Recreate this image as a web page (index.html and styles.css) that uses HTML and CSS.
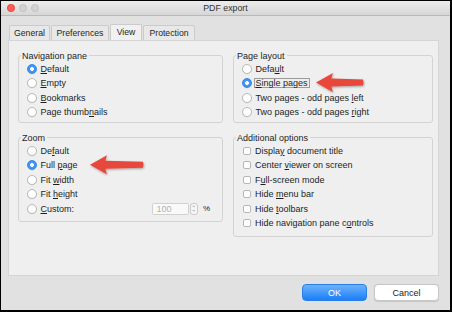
FILE: index.html
```html
<!DOCTYPE html>
<html>
<head>
<meta charset="utf-8">
<link rel="stylesheet" href="styles.css">
</head>
<body>
<div class="window">
  <div class="titlebar">
    <div class="lights"><span class="light red"></span><span class="light"></span><span class="light"></span></div>
    <div class="title">PDF export</div>
    <div></div>
  </div>
  <div class="content">
    <div class="tabs">
      <div class="tab w-general">General</div>
      <div class="tab w-pref">Preferences</div>
      <div class="tab w-view active">View</div>
      <div class="tab w-prot">Protection</div>
    </div>
    <div class="panel">
      <div class="grid">
        <div class="group short">
          <div class="legend">Navigation pane</div>
          <div class="row"><span class="radio on"></span><span><u>D</u>efault</span></div>
          <div class="row"><span class="radio"></span><span><u>E</u>mpty</span></div>
          <div class="row"><span class="radio"></span><span><u>B</u>ookmarks</span></div>
          <div class="row"><span class="radio"></span><span>Page thumb<u>n</u>ails</span></div>
        </div>
        <div class="group short">
          <div class="legend">Page layout</div>
          <div class="row"><span class="radio"></span><span>Defa<u>u</u>lt</span></div>
          <div class="row"><span class="radio on"></span><span class="focus"><u>S</u>ingle pages</span></div>
          <div class="row"><span class="radio"></span><span>Two pages - odd pages <u>l</u>eft</span></div>
          <div class="row"><span class="radio"></span><span>Two pages - odd pages <u>r</u>ight</span></div>
        </div>
        <div class="group">
          <div class="legend">Zoom</div>
          <div class="row"><span class="radio"></span><span>De<u>f</u>ault</span></div>
          <div class="row"><span class="radio on"></span><span>Full <u>p</u>age</span></div>
          <div class="row"><span class="radio"></span><span>Fit <u>w</u>idth</span></div>
          <div class="row"><span class="radio"></span><span>Fit <u>h</u>eight</span></div>
          <div class="row custom"><span class="radio"></span><span><u>C</u>ustom:</span>
            <span class="spin">100</span>
            <span class="stepper"><svg width="6" height="11" viewBox="0 0 6 11"><path d="M1.5 4 L3 2.5 L4.5 4 M1.5 7 L3 8.5 L4.5 7" fill="none" stroke="#9a9a9a" stroke-width="0.8"/></svg></span>
            <span class="pct">%</span>
          </div>
        </div>
        <div class="group">
          <div class="legend">Additional options</div>
          <div class="row"><span class="check"></span><span>Displa<u>y</u> document title</span></div>
          <div class="row"><span class="check"></span><span>Center <u>v</u>iewer on screen</span></div>
          <div class="row"><span class="check"></span><span>F<u>u</u>ll-screen mode</span></div>
          <div class="row"><span class="check"></span><span>Hide <u>m</u>enu bar</span></div>
          <div class="row"><span class="check"></span><span>Hide <u>t</u>oolbars</span></div>
          <div class="row"><span class="check"></span><span>Hide navigation pane c<u>o</u>ntrols</span></div>
        </div>
      </div>
    </div>
    <div class="buttons">
      <div class="btn ok">OK</div>
      <div class="btn cancel">Cancel</div>
    </div>
  </div>
  <svg class="arrows" width="452" height="312" viewBox="0 0 452 312">
    <defs>
      <filter id="sh" x="-20%" y="-30%" width="140%" height="160%">
        <feDropShadow dx="0.6" dy="1" stdDeviation="0.8" flood-color="#000" flood-opacity="0.35"/>
      </filter>
    </defs>
    <path filter="url(#sh)" fill="#e8463a" d="M316 82.6 L333 73 Q331.5 76.5 331.5 78.6 L363 79.6 Q364 82.6 363 85.6 L331.5 86.6 Q331.5 88.7 333 92.2 Z"/>
    <path filter="url(#sh)" fill="#e8463a" d="M90 164.8 L107 155.3 Q105.5 158.8 105.5 160.8 L143 161.8 Q144 164.8 143 167.8 L105.5 168.8 Q105.5 170.9 107 174.4 Z"/>
  </svg>
</div>
</body>
</html>
```

FILE: styles.css
```css
* { box-sizing: border-box; }
html, body { margin: 0; padding: 0; }
body {
  width: 452px;
  height: 312px;
  background: #000;
  overflow: hidden;
  font-family: "Liberation Sans", Arial, sans-serif;
  font-size: 9px;
  color: #1e1e1e;
}
.window {
  position: relative;
  width: 452px;
  height: 312px;
  border: 1px solid #000;
  border-right-width: 2px;
  border-bottom-width: 2px;
  background: #e1e1e1;
  display: flex;
  flex-direction: column;
}
.titlebar {
  flex: none;
  height: 15px;
  background: linear-gradient(#ececec, #d7d7d7);
  border-bottom: 1px solid #b9b9b9;
  display: grid;
  grid-template-columns: 1fr auto 1fr;
  align-items: center;
}
.lights { display: flex; gap: 4.5px; padding-left: 6px; }
.light {
  width: 7.5px;
  height: 7.5px;
  border-radius: 50%;
  background: #d2d2d2;
  border: 0.5px solid #c2c2c2;
}
.light.red { background: #fc5e56; border-color: #e2463f; }
.title { font-size: 8.8px; color: #333; line-height: 14px; }
.content {
  flex: 1;
  display: flex;
  flex-direction: column;
  padding: 8px 11px 0 7px;
}
.tabs {
  display: flex;
  align-items: flex-end;
  gap: 1px;
  height: 16px;
  padding-left: 1px;
}
.tab {
  height: 15px;
  border: 1px solid #cbcbcb;
  border-bottom: none;
  border-radius: 2px 2px 0 0;
  background: #e8e8e8;
  font-size: 8.7px;
  line-height: 14px;
  text-align: center;
  color: #1e1e1e;
}
.tab.active { height: 16px; background: #f1f1f1; line-height: 15px; }
.w-general { width: 41px; }
.w-pref { width: 58px; }
.w-view { width: 32px; }
.w-prot { width: 52px; }
.panel {
  width: 431px;
  height: 236px;
  background: #efefef;
  border: 1px solid #d5d5d5;
  padding: 14px 5px 0 9px;
}
.grid {
  display: grid;
  grid-template-columns: 205px 200px;
  column-gap: 10px;
  row-gap: 14px;
  align-items: start;
}
.group {
  border: 1px solid #d3d3d3;
  border-radius: 3px;
  padding: 0.5px 0 5px;
}
.group.short { padding-bottom: 2.5px; }
.legend {
  display: table;
  height: 11px;
  line-height: 11px;
  margin: -6px 0 0 2px;
  padding: 0 2px 0 1px;
  background: #efefef;
}
.row {
  height: 14.5px;
  display: flex;
  align-items: center;
  padding-left: 8px;
  white-space: nowrap;
}
u { text-decoration-thickness: 1px; text-underline-offset: 1px; }
.radio {
  flex: none;
  width: 10px;
  height: 10px;
  border-radius: 50%;
  background: #fff;
  border: 1px solid #b9b9b9;
  margin-right: 3.5px;
  box-shadow: 0 0.5px 0.5px rgba(0,0,0,0.08);
}
.radio.on {
  border-color: #3484e6;
  background: radial-gradient(circle, #fff 0 1.7px, #3f96f8 2.2px);
}
.check {
  flex: none;
  width: 8px;
  height: 8px;
  border: 1px solid #b6b6b6;
  border-radius: 2px;
  background: #fff;
  margin-left: 1px;
  margin-right: 4px;
}
.focus {
  display: inline-block;
  height: 10px;
  line-height: 8px;
  border: 1px solid #9c9c9c;
  padding: 0 1px;
  margin-left: -2px;
}
.spin {
  margin-left: auto;
  width: 37px;
  height: 12.5px;
  line-height: 10.5px;
  border: 1px solid #d0d0d0;
  border-radius: 1.5px;
  background: #f9f9f9;
  color: #b2b2b2;
  padding-left: 3px;
}
.stepper {
  margin-left: 1px;
  width: 7.5px;
  height: 12px;
  border: 1px solid #cacaca;
  border-radius: 3px;
  background: #f7f7f7;
  display: flex;
  align-items: center;
  justify-content: center;
}
.stepper svg { display: block; }
.pct { margin-left: 5px; margin-right: 12px; font-size: 8px; }
.buttons {
  display: flex;
  justify-content: flex-end;
  gap: 7px;
  margin-top: 8px;
}
.btn {
  width: 65px;
  height: 17px;
  border-radius: 4px;
  display: flex;
  align-items: center;
  justify-content: center;
  font-size: 9px;
}
.ok {
  background: linear-gradient(#6cb2fb, #1b7ff7);
  border: 1px solid #2a7fe6;
  color: #fff;
}
.cancel {
  background: #fff;
  border: 1px solid #c7c7c7;
  box-shadow: 0 0.5px 1px rgba(0,0,0,0.12);
  color: #1e1e1e;
}
.arrows {
  position: absolute;
  left: -1px;
  top: -1px;
  pointer-events: none;
}
```
